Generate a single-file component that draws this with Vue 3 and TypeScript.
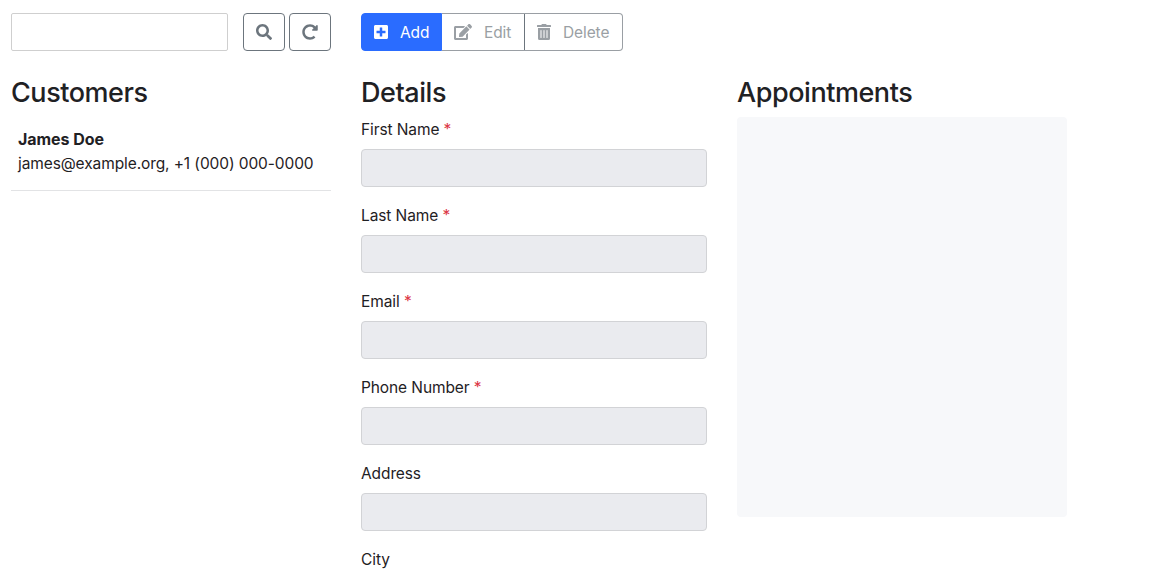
<script setup lang="ts">
const fields = [
  { label: 'First Name', required: true },
  { label: 'Last Name', required: true },
  { label: 'Email', required: true },
  { label: 'Phone Number', required: true },
  { label: 'Address', required: false },
  { label: 'City', required: false },
]
</script>

<template>
  <div class="page">
    <section class="customers">
      <div class="search">
        <input class="search-input" type="text" />
        <button class="icon-btn search-btn" type="button" aria-label="Search">
          <svg class="i16" viewBox="0 0 512 512"><path d="M505 442.7L405.3 343c-4.5-4.5-10.6-7-17-7H372c27.6-35.3 44-79.7 44-128C416 93.1 322.9 0 208 0S0 93.1 0 208s93.1 208 208 208c48.3 0 92.7-16.4 128-44v16.3c0 6.4 2.5 12.5 7 17l99.7 99.7c9.4 9.4 24.6 9.4 33.9 0l28.3-28.3c9.4-9.4 9.4-24.6.1-34zM208 336c-70.7 0-128-57.2-128-128 0-70.7 57.2-128 128-128 70.7 0 128 57.2 128 128 0 70.7-57.2 128-128 128z" /></svg>
        </button>
        <button class="icon-btn" type="button" aria-label="Reload">
          <svg class="i16" viewBox="0 0 512 512"><path d="M256.455 8c66.269.119 126.437 26.233 170.859 68.685l35.715-35.715C478.149 25.851 504 36.559 504 57.941V192c0 13.255-10.745 24-24 24H345.941c-21.382 0-32.09-25.851-16.971-40.971l41.75-41.75c-30.864-28.899-70.801-44.907-113.23-45.273-92.398-.798-170.283 73.977-169.484 169.442C88.764 348.009 162.184 424 256 424c41.127 0 79.997-14.678 110.629-41.556 4.743-4.161 11.906-3.908 16.368.553l39.662 39.662c4.872 4.872 4.631 12.815-.482 17.433C378.202 479.813 319.926 504 256 504 119.034 504 8.001 392.967 8 256.002 7.999 119.193 119.646 7.755 256.455 8z" /></svg>
        </button>
      </div>
      <h2>Customers</h2>
      <div class="entry">
        <strong>James Doe</strong>
        <div class="contact">james@example.org, +1 (000) 000-0000</div>
      </div>
    </section>

    <section class="details">
      <div class="toolbar">
        <button class="tool add" type="button">
          <svg class="i14" viewBox="0 0 448 512"><path d="M400 32H48C21.5 32 0 53.5 0 80v352c0 26.5 21.5 48 48 48h352c26.5 0 48-21.5 48-48V80c0-26.5-21.5-48-48-48zm-32 252c0 6.6-5.4 12-12 12h-92v92c0 6.6-5.4 12-12 12h-56c-6.6 0-12-5.4-12-12v-92H92c-6.6 0-12-5.4-12-12v-56c0-6.6 5.4-12 12-12h92v-92c0-6.6 5.4-12 12-12h56c6.6 0 12 5.4 12 12v92h92c6.6 0 12 5.4 12 12v56z" /></svg>
          <span>Add</span>
        </button>
        <button class="tool edit" type="button" disabled>
          <svg class="i18" viewBox="0 0 576 512"><path d="M402.6 83.2l90.2 90.2c3.8 3.8 3.8 10 0 13.8L274.4 405.6l-92.8 10.3c-12.4 1.4-22.9-9.1-21.5-21.5l10.3-92.8L388.8 83.2c3.8-3.8 10-3.8 13.8 0zm162-22.9l-48.8-48.8c-15.2-15.2-39.9-15.2-55.2 0l-35.4 35.4c-3.8 3.8-3.8 10 0 13.8l90.2 90.2c3.8 3.8 10 3.8 13.8 0l35.4-35.4c15.2-15.3 15.2-40 0-55.2zM384 346.2V448H64V128h229.8c3.2 0 6.2-1.3 8.5-3.5l40-40c7.6-7.6 2.2-20.5-8.5-20.5H48C21.5 64 0 85.5 0 112v352c0 26.5 21.5 48 48 48h352c26.5 0 48-21.5 48-48V306.2c0-10.7-12.9-16-20.5-8.5l-40 40c-2.2 2.3-3.5 5.3-3.5 8.5z" /></svg>
          <span>Edit</span>
        </button>
        <button class="tool delete" type="button" disabled>
          <svg class="i14" viewBox="0 0 448 512"><path d="M32 464a48 48 0 0 0 48 48h288a48 48 0 0 0 48-48V128H32zm272-256a16 16 0 0 1 32 0v224a16 16 0 0 1-32 0zm-96 0a16 16 0 0 1 32 0v224a16 16 0 0 1-32 0zm-96 0a16 16 0 0 1 32 0v224a16 16 0 0 1-32 0zM432 32H312l-9.4-18.7A24 24 0 0 0 281.1 0H166.8a23.72 23.72 0 0 0-21.4 13.3L136 32H16A16 16 0 0 0 0 48v32a16 16 0 0 0 16 16h416a16 16 0 0 0 16-16V48a16 16 0 0 0-16-16z" /></svg>
          <span>Delete</span>
        </button>
      </div>
      <h2>Details</h2>
      <div v-for="field in fields" :key="field.label" class="field">
        <label>{{ field.label }} <span v-if="field.required" class="req">*</span></label>
        <input type="text" disabled />
      </div>
    </section>

    <section class="appointments">
      <h2>Appointments</h2>
      <div class="calendar"></div>
    </section>
  </div>
</template>

<style>
html, body { overflow: hidden; height: 100%; }
</style>

<style scoped>
.page {
  display: flex;
  gap: 30px;
  padding: 13px 11px 0;
  font-family: Inter, "Liberation Sans", sans-serif;
  font-size: 15.5px;
  letter-spacing: -0.1px;
  line-height: 24px;
  color: #1f2124;
  box-sizing: border-box;
}
.customers { width: 320px; flex: none; }
.details { width: 346px; flex: none; }
.appointments { width: 330px; flex: none; padding-top: 63px; }
.search, .toolbar { display: flex; height: 38px; margin-bottom: 25px; }
.search-input {
  width: 217px;
  height: 38px;
  box-sizing: border-box;
  border: 1px solid #cfcfcf;
  border-radius: 2px;
  background: #fff;
}
.icon-btn {
  width: 42px;
  height: 38px;
  margin-left: 4px;
  padding: 0;
  display: flex;
  align-items: center;
  justify-content: center;
  background: #fff;
  border: 1px solid #6c757d;
  border-radius: 4px;
  color: #6c757d;
}
.search-btn { margin-left: 15px; }
.i16 { width: 16px; height: 16px; fill: currentColor; flex: none; }
.i14 { width: 14px; height: 16px; fill: currentColor; flex: none; }
.i18 { width: 18px; height: 16px; fill: currentColor; flex: none; }
h2 {
  margin: 0 0 7px;
  font-size: 27px;
  line-height: 34px;
  font-weight: 500;
  letter-spacing: -0.45px;
}
.entry {
  padding: 10px 7px 15px;
  border-bottom: 1px solid #e2e3e5;
}
.entry strong { display: block; font-weight: 700; font-size: 16px; letter-spacing: -0.05px; }
.contact { white-space: nowrap; height: 24px; padding-top: 1px; box-sizing: border-box; line-height: 24px; }
.toolbar { width: 262px; }
.tool {
  height: 38px;
  box-sizing: border-box;
  display: flex;
  align-items: center;
  gap: 12px;
  padding: 0 12px;
  font: inherit;
  letter-spacing: inherit;
  background: #fff;
  border: 1px solid #9a9fa4;
  color: #9a9fa4;
}
.tool span { padding-top: 2px; }
.add {
  width: 81px;
  background: #2a6cff;
  border-color: #2a6cff;
  color: #fff;
  border-radius: 4px 0 0 4px;
}
.edit { width: 82px; border-left: 0; border-right: 0; }
.delete { width: 99px; border-left-color: #6c757d; border-radius: 0 4px 4px 0; }
.field { margin-bottom: 16px; }
label { display: block; margin-bottom: 8px; height: 24px; padding-top: 1px; box-sizing: border-box; }
.req { color: #dc3545; }
.field input {
  display: block;
  width: 100%;
  height: 38px;
  box-sizing: border-box;
  border: 1px solid #d2d3d6;
  border-radius: 4px;
  background: #eaebef;
}
.calendar {
  height: 400px;
  border-radius: 4px;
  background: #f7f8fa;
}
</style>
